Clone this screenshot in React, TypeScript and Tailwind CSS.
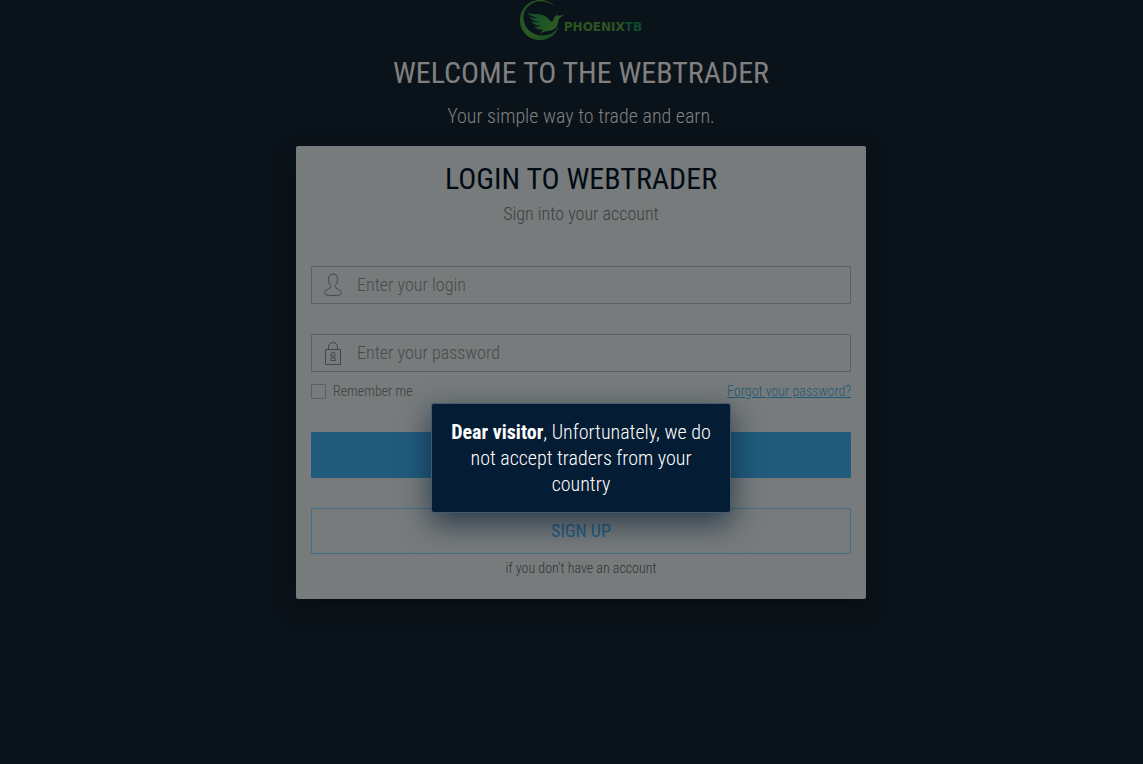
import type { ReactNode } from "react";

function Logo() {
  return (
    <a href="#" aria-label="PhoenixTB" className="flex h-10 items-start justify-center">
      <svg width="44" height="41" viewBox="0 0 44 41" aria-hidden="true" className="shrink-0">
        <defs>
          <linearGradient id="ring" x1="0" y1="0.3" x2="1" y2="0.7">
            <stop offset="0" stopColor="#1f5226" />
            <stop offset="0.4" stopColor="#2e5a20" />
            <stop offset="1" stopColor="#124d28" />
          </linearGradient>
          <linearGradient id="bird" x1="0" y1="0" x2="1" y2="0.3">
            <stop offset="0" stopColor="#0f4a2c" />
            <stop offset="1" stopColor="#305c20" />
          </linearGradient>
        </defs>
        <path
          d="M35.500 7C31.500 2.500 26 0 20 0C8.500 0 0 9 0 20.500C0 31.500 9 40 20 40C29.500 40 36.500 34.500 39 25.500C35.500 32 30 35.500 23 35.500C12 35.500 4 28.500 3.500 18C3 9 11 1.300 20.500 1.300C26 1.300 31 3.300 35.500 7Z"
          fill="url(#ring)"
        />
        <path
          d="M7.500 12.500C12 15 20 13 25.500 16.200C28.500 18 29.500 21 31.500 21.500C33 21.500 33.500 19.500 34 18C34.800 15.600 36.300 14.800 38.500 15.500C40 16 42 15.500 43.800 14.500C42.500 16.500 40 17.500 38.800 19C38 20.500 38.500 22 37.800 24C36.500 28 33.500 30.300 29.500 30.800C26.500 31.200 23.500 31.500 20.500 33.800C21 31.800 22 30.600 23.500 29.800C20 30 16 28.800 14 26.500C17 27 19.500 26.700 21 25.800C16.500 25.600 13 24 11.500 21.500C14 22.300 17 22.500 19 21.800C14.500 21.300 10.500 19.500 9.200 17C11.500 18 14.500 18.500 17 18C13 17 9 15.300 7.500 12.500Z"
          fill="url(#bird)"
        />
      </svg>
      <span className="mt-[21px] font-['DejaVu_Sans',sans-serif] text-xs font-bold leading-3 text-[#2d5520]">
        PHOENIX<span className="text-[#0f4a2c]">TB</span>
      </span>
    </a>
  );
}

function UserIcon() {
  return (
    <svg width="20" height="24" viewBox="0 0 20 24" fill="none" stroke="#43474a" strokeWidth="1" aria-hidden="true">
      <path d="M10 1C7 1 5.500 3 5.500 6.200C5.500 9 6.300 11 7.600 12.500C7.800 14.500 6.700 15.300 4.800 16.300C2.500 17.300 1.500 18.500 1.500 20.500C1.500 22 5 22.500 10 22.500C15 22.500 18.500 22 18.500 20.500C18.500 18.500 17.500 17.300 15.200 16.300C13.300 15.300 12.200 14.500 12.400 12.500C13.700 11 14.500 9 14.500 6.200C14.500 3 13 1 10 1Z" />
    </svg>
  );
}

function LockIcon() {
  return (
    <svg width="20" height="24" viewBox="0 0 20 24" fill="none" stroke="#43474a" strokeWidth="1" aria-hidden="true">
      <path d="M2.500 8.500H17.500V23.500H2.500Z" />
      <path d="M5.500 8.500V6C5.500 3.500 7.500 1.500 10 1.500S14.500 3.500 14.500 6V8.500" />
      <path d="M8.500 15.500C7 14 7.500 11.500 10 11.500S13 14 11.500 15.500L12.500 19.500H7.500Z" />
      <path d="M10 13V18" />
    </svg>
  );
}

type FieldProps = { id: string; type: string; placeholder: string; icon: ReactNode };

function Field({ id, type, placeholder, icon }: FieldProps) {
  return (
    <div className="flex h-[38px] items-center rounded-[1px] border border-[#5a6064]">
      <label htmlFor={id} aria-label={placeholder} className="flex w-[45px] shrink-0 pl-[11px]">
        {icon}
      </label>
      <input
        id={id}
        type={type}
        placeholder={placeholder}
        className="h-full min-w-0 flex-1 bg-transparent pb-0.5 text-lg font-light outline-none placeholder:text-[#474b4d]"
      />
    </div>
  );
}

export default function App() {
  return (
    <div className="relative min-h-screen bg-[#0b131a] pl-[19px] font-['Roboto_Condensed','Liberation_Sans_Narrow',Roboto,sans-serif]">
      <main className="mx-auto w-full max-w-[570px]">
        <header className="flex flex-col text-center">
          <Logo />
          <h1 className="mt-3 text-3xl leading-[42px] text-[#808080]">WELCOME TO THE WEBTRADER</h1>
          <p className="mt-[10px] text-xl leading-6 font-light text-[#808080]">Your simple way to trade and earn.</p>
        </header>

        <section className="mt-[18px] rounded-xs bg-[#777b7b] px-[15px] pt-3 pb-[21px] shadow-[0_8px_20px_rgba(3,7,12,0.5)]">
          <h2 className="text-center text-3xl leading-[42px] text-[#020b14]">LOGIN TO WEBTRADER</h2>
          <p className="mt-0.5 text-center text-lg leading-6 font-light text-[#3c4042]">Sign into your account</p>
          <form className="mt-10" onSubmit={(e) => e.preventDefault()}>
            <div className="flex flex-col gap-[30px]">
              <Field id="login" type="text" placeholder="Enter your login" icon={<UserIcon />} />
              <Field id="password" type="password" placeholder="Enter your password" icon={<LockIcon />} />
            </div>
            <div className="mt-[9px] flex items-center justify-between text-sm leading-5 font-light">
              <label className="flex items-center gap-[7px] text-[#3c4042]">
                <input type="checkbox" className="size-[15px] appearance-none rounded-[1px] border border-[#5a6064]" />
                Remember me
              </label>
              <a href="#" className="text-[#1e5878] underline">
                Forgot your password?
              </a>
            </div>
            <button type="submit" aria-label="Login" className="mt-[31px] block h-[46px] w-full rounded-[1px] bg-[#215b7b]" />
            <button
              type="button"
              className="mt-[30px] block h-[46px] w-full rounded-[1px] border border-[#3f6d88] text-lg text-[#215b82]"
            >
              SIGN UP
            </button>
            <p className="mt-1 text-center text-sm leading-5 font-light text-[#303436]">if you don't have an account</p>
          </form>
        </section>
      </main>

      <div className="absolute inset-x-0 top-[403px] flex justify-center pl-[19px]">
        <div
          role="alertdialog"
          aria-labelledby="notice"
          className="w-[300px] rounded-[3px] border border-[#465a70] bg-[#051c35] px-[15px] py-[15px] text-center shadow-[0_10px_30px_rgba(5,28,53,0.7)]"
        >
          <p id="notice" className="text-xl leading-[26px] font-light text-white">
            <strong className="font-bold">Dear visitor</strong>, Unfortunately, we do not accept traders from your country
          </p>
        </div>
      </div>
    </div>
  );
}
